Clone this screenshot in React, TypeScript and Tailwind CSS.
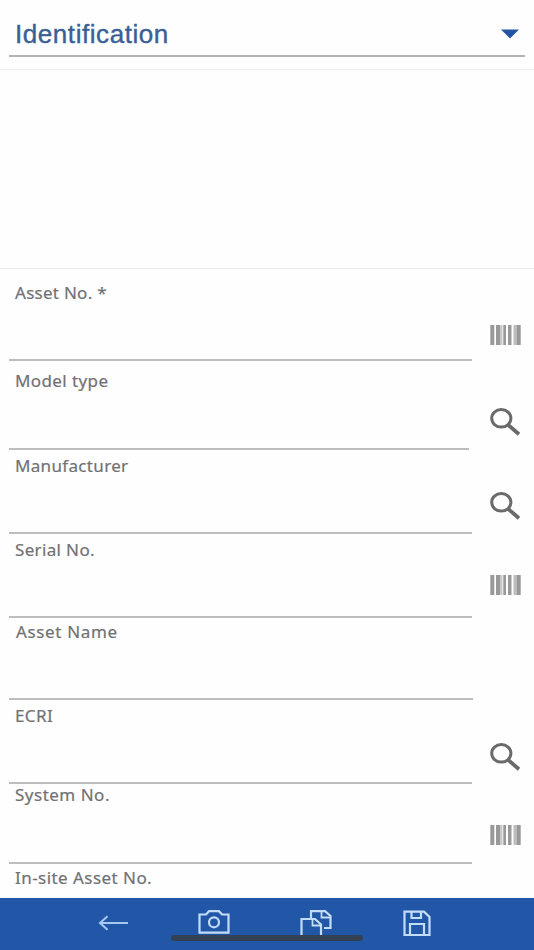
import React from 'react';

type IconType = 'barcode' | 'search' | 'none';

interface Field {
  label: string;
  icon: IconType;
  row: string;
  text: string;
  line: string;
  iconBox: string;
}

const FIELDS: Field[] = [
  { label: 'Asset No. *', icon: 'barcode', row: 'h-[92px]', text: 'pt-[14px] pl-[6px] tracking-[0.27px]', line: 'w-[463px]', iconBox: 'pb-4' },
  { label: 'Model type', icon: 'search', row: 'h-[89px]', text: 'pt-[10px] pl-[6px] tracking-[0.4px]', line: 'w-[460px]', iconBox: 'pb-[13px]' },
  { label: 'Manufacturer', icon: 'search', row: 'h-[84px]', text: 'pt-[6px] pl-[6px] tracking-[0.33px]', line: 'w-[463px]', iconBox: 'pb-[13px]' },
  { label: 'Serial No.', icon: 'barcode', row: 'h-[84px]', text: 'pt-[6px] pl-[6px] tracking-[0.35px]', line: 'w-[463px]', iconBox: 'pb-[23px]' },
  { label: 'Asset Name', icon: 'none', row: 'h-[82px]', text: 'pt-[4px] pl-[7px] tracking-[0.65px]', line: 'w-[464px]', iconBox: '' },
  { label: 'ECRI', icon: 'search', row: 'h-[84px]', text: 'pt-[6px] pl-[6px] tracking-[0.4px]', line: 'w-[463px]', iconBox: 'pb-[12px]' },
  { label: 'System No.', icon: 'barcode', row: 'h-[80px]', text: 'pt-[1px] pl-[6px] tracking-[0.5px]', line: 'w-[463px]', iconBox: 'pb-[19px]' },
];

function BarcodeIcon() {
  return (
    <svg width="31" height="20" viewBox="0 0 31 20" fill="#999999">
      <rect x="0.3" width="4" height="20" />
      <rect x="6" width="4.5" height="20" />
      <rect x="10.5" width="2" height="20" fill="#c8c8c8" />
      <rect x="13.3" width="2.7" height="20" />
      <rect x="18" width="3.5" height="20" />
      <rect x="23.5" width="3.5" height="20" fill="#bcbcbc" />
      <rect x="27" width="3.7" height="20" />
    </svg>
  );
}

function SearchIcon() {
  return (
    <svg width="31" height="29" viewBox="0 0 31 29" fill="none" stroke="#6a6a6a" strokeWidth="3">
      <ellipse cx="11.3" cy="10.3" rx="9.6" ry="8.8" />
      <path d="M18.2 17 L29 26.2" strokeWidth="3.8" />
    </svg>
  );
}

function BottomBar() {
  return (
    <footer className="relative h-[52px] shrink-0 bg-[#2257a7]">
      <div className="flex h-full items-start pl-[98px] pt-[12px] text-[#c3dcf8]">
        <svg className="mt-[3px]" width="31" height="20" viewBox="0 0 31 20" fill="none" stroke="#a6c9f0" strokeWidth="2">
          <path d="M30 10 H2 M9.5 3.2 L2 10 L9.5 16.8" />
        </svg>
        <svg className="ml-[69px]" width="32" height="25" viewBox="0 0 32 25" fill="none" stroke="currentColor" strokeWidth="2.2">
          <path d="M1.5 4.5 H8 L11 1.2 H21 L24 4.5 H30.5 V22.7 H1.5 Z" />
          <circle cx="16" cy="12.3" r="5" />
        </svg>
        <svg className="ml-[70px]" width="32" height="27" viewBox="0 0 32 27" fill="none" stroke="currentColor" strokeWidth="2.2">
          <path d="M11 8 V1.2 H25 L30.5 6 V18 H24" />
          <path d="M21.5 1 V7.5 H30.5" strokeWidth="1.8" />
          <path d="M1.5 27 V9 H15 L21 14.5 V27" />
          <path d="M12.5 9 V15.5 H21" strokeWidth="1.8" />
        </svg>
        <svg className="ml-[71px]" width="28" height="27" viewBox="0 0 28 27" fill="none" stroke="currentColor" strokeWidth="2.2">
          <path d="M1.5 1.7 H21 L26.5 7 V25 H1.5 Z" />
          <path d="M8.5 1.5 V8 H18 V1.5 M7 25 V14 H21 V25" />
        </svg>
      </div>
      {/* home indicator */}
      <div className="absolute left-[171px] top-[37px] h-[6px] w-[192px] rounded-full bg-[#344155]" />
    </footer>
  );
}

function App() {
  return (
    <div className="flex h-[950px] w-[534px] flex-col overflow-hidden bg-[#fefefe] font-['Noto_Sans',sans-serif] text-[17px] leading-5 text-[#717174]">
      <header className="h-[70px] shrink-0 border-b border-[#ececec] px-[9px] pt-3">
        <button className="flex h-[45px] w-full items-start justify-between border-b-2 border-[#b2b2b2] pl-[6px] pr-[6px]">
          <span className="pt-[8px] font-['Liberation_Sans',sans-serif] text-[26px] leading-7 tracking-[0.56px] text-[#3a5f96] [-webkit-text-stroke:0.4px_#3a5f96]">
            Identification
          </span>
          <svg className="mt-[17px]" width="18" height="10" viewBox="0 0 18 10">
            <path d="M0 0.5 H18 L9 9.5 Z" fill="#2455a0" />
          </svg>
        </button>
      </header>

      <section className="h-[199px] shrink-0 border-b border-[#ececec]" />

      <main className="min-h-0 flex-1 overflow-hidden pl-[9px] [-webkit-text-stroke:0.2px_#717174]">
        {FIELDS.map((field) => (
          <div key={field.label} className={`flex ${field.row}`}>
            <label className={`block shrink-0 border-b-2 border-[#bdbdbd] ${field.text} ${field.line}`}>
              {field.label}
            </label>
            <div className={`ml-auto flex w-[44px] items-end ${field.iconBox}`}>
              {field.icon === 'barcode' && <BarcodeIcon />}
              {field.icon === 'search' && <SearchIcon />}
            </div>
          </div>
        ))}
        <label className="block pl-[6px] pt-[4px] tracking-[0.45px]">In-site Asset No.</label>
      </main>

      <BottomBar />
    </div>
  );
}

export default App;
